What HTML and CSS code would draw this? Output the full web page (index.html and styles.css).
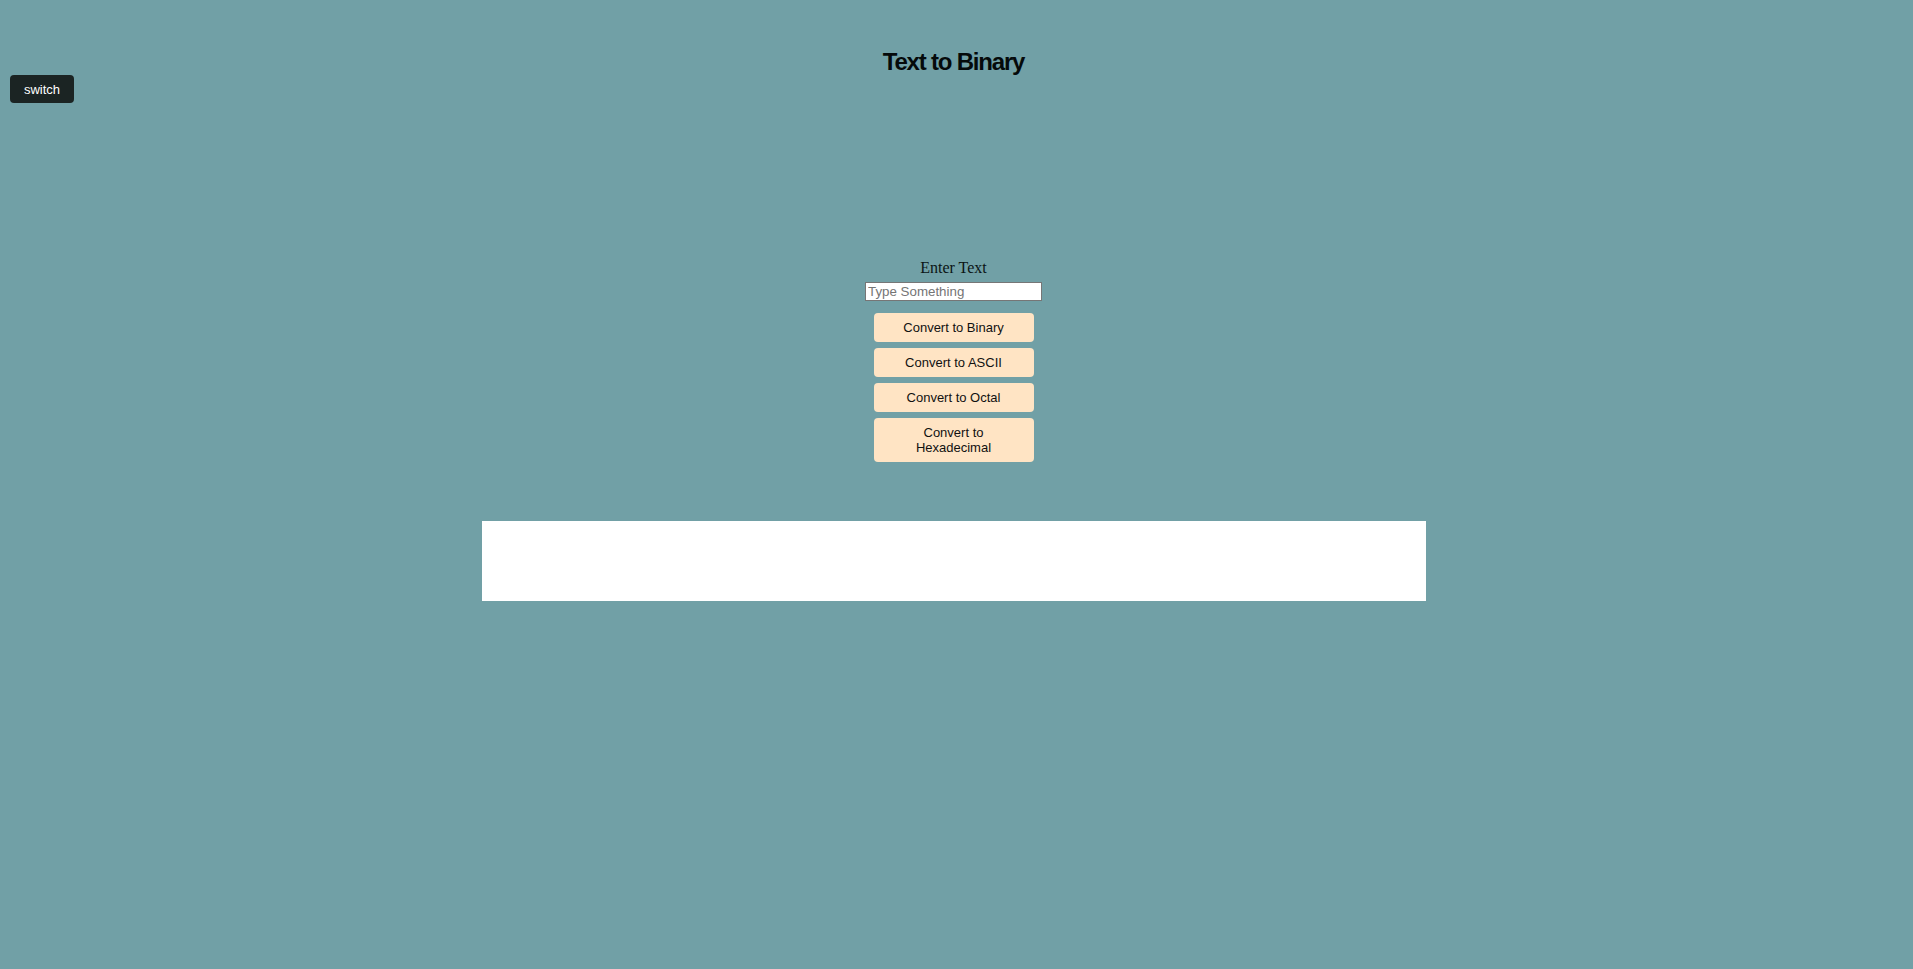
FILE: index.html
```html
<!DOCTYPE html>
<html lang="en">
<head>
<meta charset="utf-8">
<title>Text to Binary</title>
<link rel="stylesheet" href="styles.css">
</head>
<body>
  <header class="header">
    <h1 class="title">Text to Binary</h1>
    <button class="switch" type="button">switch</button>
  </header>
  <main class="main">
    <div class="form">
      <label class="label" for="text">Enter Text</label>
      <input class="field" id="text" type="text" placeholder="Type Something">
      <div class="actions">
        <button class="action" type="button">Convert to Binary</button>
        <button class="action" type="button">Convert to ASCII</button>
        <button class="action" type="button">Convert to Octal</button>
        <button class="action" type="button">Convert to Hexadecimal</button>
      </div>
    </div>
    <div class="output"></div>
  </main>
</body>
</html>
```

FILE: styles.css
```css
html, body {
  margin: 0;
  padding: 0;
}
body {
  background: #71a0a6;
  min-height: 969px;
  font-family: "Liberation Sans", Arial, sans-serif;
}
.header {
  padding-top: 48px;
  display: flex;
  flex-direction: column;
  align-items: flex-start;
}
.title {
  align-self: stretch;
  margin: 0;
  text-align: center;
  font-size: 24px;
  line-height: 27px;
  font-weight: bold;
  letter-spacing: -1.2px;
  color: #050a0a;
  padding-right: 6px;
}
.switch {
  margin: 0 0 0 10px;
  width: 64px;
  height: 28px;
  border: none;
  border-radius: 4px;
  background: #1b2423;
  color: #ffffff;
  font-family: "Liberation Sans", Arial, sans-serif;
  font-size: 13px;
  padding: 0;
}
.main {
  display: flex;
  flex-direction: column;
  align-items: center;
  padding-top: 156px;
  padding-right: 6px;
}
.form {
  display: flex;
  flex-direction: column;
  align-items: center;
}
.label {
  font-family: "Liberation Serif", "Times New Roman", serif;
  font-size: 16px;
  line-height: 18px;
  color: #0b1414;
}
.field {
  margin-top: 5px;
  box-sizing: border-box;
  width: 177px;
  height: 19px;
  border: 1px solid #767676;
  padding: 0 2px;
  font-family: "Liberation Sans", Arial, sans-serif;
  font-size: 13.33px;
  background: #ffffff;
  color: #000;
}
.field::placeholder {
  color: #757575;
}
.actions {
  margin-top: 12px;
  display: flex;
  flex-direction: column;
  gap: 6.5px;
}
.action {
  width: 160px;
  border: none;
  border-radius: 4px;
  background: #ffe4c4;
  color: #111;
  font-family: "Liberation Sans", Arial, sans-serif;
  font-size: 13px;
  line-height: 15px;
  padding: 6.75px 24px;
  margin: 0;
}
.output {
  margin-top: 59.5px;
  width: 944px;
  height: 80px;
  background: #ffffff;
}
```
